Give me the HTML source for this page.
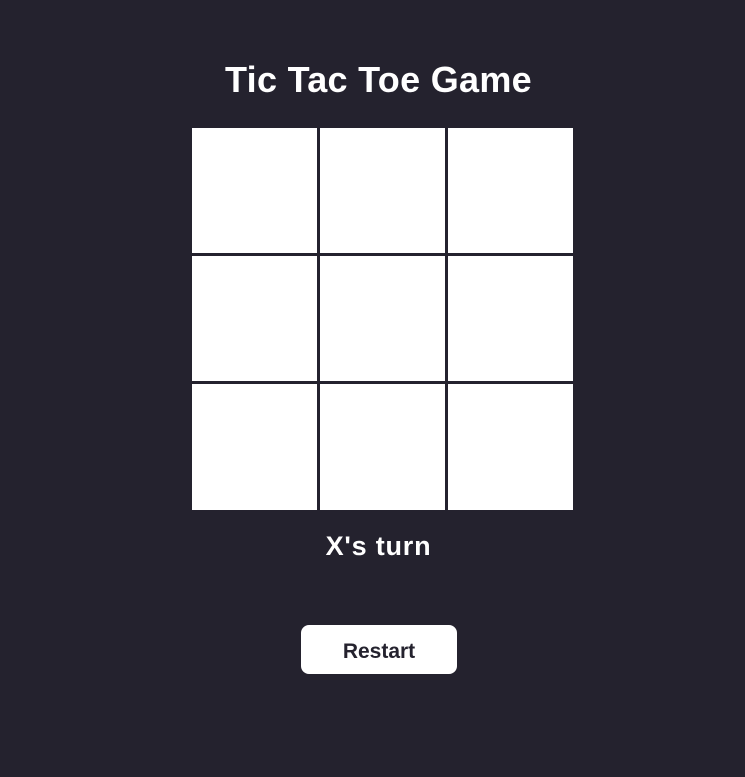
<!DOCTYPE html>
<html><head><style>
html,body{margin:0;padding:0;background:#24222e;width:745px;height:777px;overflow:hidden;font-family:"Liberation Sans",sans-serif;}
h1{position:absolute;left:6px;width:745px;top:58px;margin:0;text-align:center;color:#fff;font-size:36px;font-weight:bold;line-height:44px;letter-spacing:0.3px;}
.c{position:absolute;width:125px;background:#fff;}
.t{position:absolute;left:6px;width:745px;top:530px;text-align:center;color:#fff;font-size:27px;font-weight:bold;line-height:32px;letter-spacing:0.8px;}
.b{position:absolute;left:301px;top:625px;width:156px;height:49px;background:#fff;border-radius:8px;text-align:center;line-height:53px;font-size:21px;font-weight:bold;color:#24222e;}
</style></head><body>
<h1>Tic Tac Toe Game</h1>
<div class="c" style="left:192px;top:128px;height:125px"></div>
<div class="c" style="left:320px;top:128px;height:125px"></div>
<div class="c" style="left:448px;top:128px;height:125px"></div>
<div class="c" style="left:192px;top:256px;height:125px"></div>
<div class="c" style="left:320px;top:256px;height:125px"></div>
<div class="c" style="left:448px;top:256px;height:125px"></div>
<div class="c" style="left:192px;top:384px;height:126px"></div>
<div class="c" style="left:320px;top:384px;height:126px"></div>
<div class="c" style="left:448px;top:384px;height:126px"></div>
<div class="t">X's turn</div>
<div class="b">Restart</div>
</body></html>
